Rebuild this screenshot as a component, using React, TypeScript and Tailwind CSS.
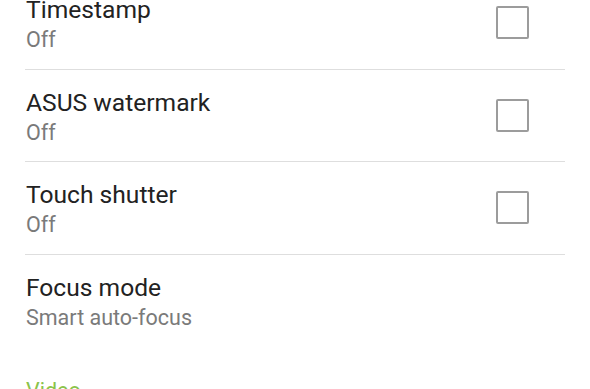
const items = [
  { title: 'Timestamp', value: 'Off', checkbox: true },
  { title: 'ASUS watermark', value: 'Off', checkbox: true },
  { title: 'Touch shutter', value: 'Off', checkbox: true },
  { title: 'Focus mode', value: 'Smart auto-focus', checkbox: false, last: true },
];

const SettingRow = ({ title, value, checkbox, last }: any) => (
  <div className={`mx-[25px] h-[92.5px] flex justify-between ${last ? '' : 'border-b border-[#dedede]'}`}>
    <div className="pt-[18px] pl-[1px]">
      <div className="text-[24.6px] leading-[30px] text-[#222222]">{title}</div>
      <div className="mt-[1px] text-[21.5px] leading-[28px] text-[#7a7a7a]">{value}</div>
    </div>
    {checkbox && (
      <div className="self-center mr-[36px] w-[33px] h-[33px] border-2 border-[#9c9c9c] rounded-[2px]" />
    )}
  </div>
);

export default function App() {
  return (
    <div className="w-[590px] h-[389px] overflow-hidden bg-white" style={{ fontFamily: 'Roboto, "Noto Sans", sans-serif' }}>
      <div className="-mt-[23px]">
        {items.map(it => (
          <SettingRow key={it.title} {...it} />
        ))}
        <div className="px-[26px] pt-[30px] text-[21.5px] leading-[28px] text-[#8bc34a]">Video</div>
      </div>
    </div>
  );
}
